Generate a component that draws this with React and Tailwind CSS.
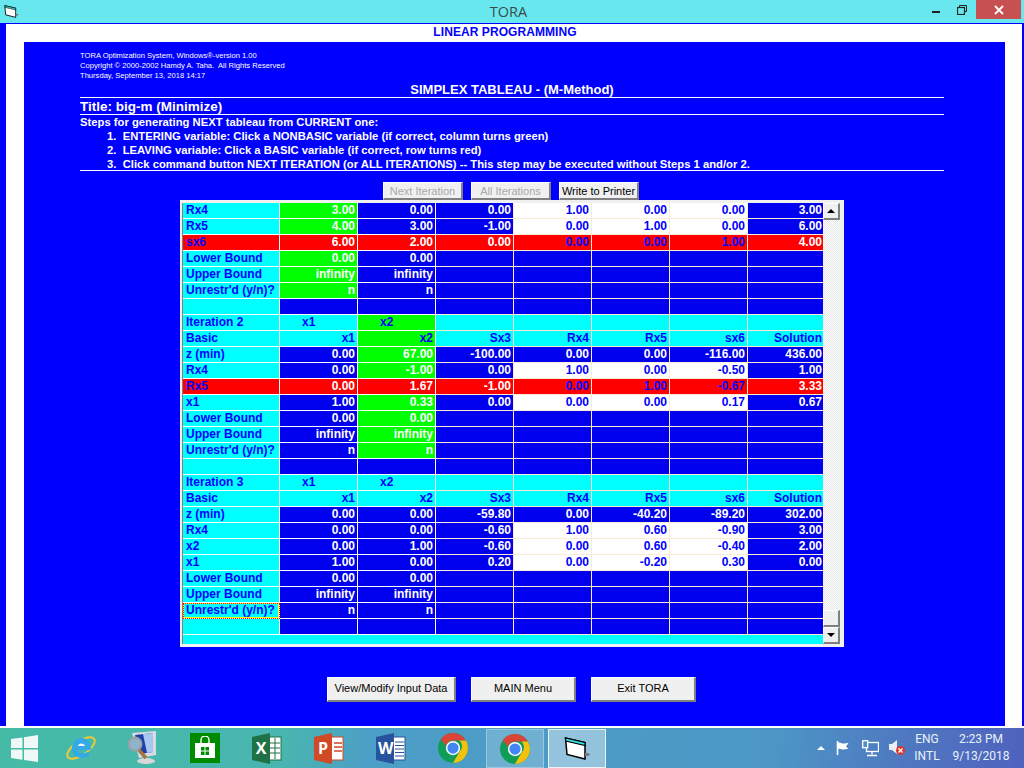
import React from 'react';

const LABEL = 'w-[97px]';
const WIDTHS = ['w-[78px]', 'w-[78px]', 'w-[78px]', 'w-[78px]', 'w-[78px]', 'w-[78px]', 'w-[76px]'];

// c = cyan, b = blue, g = green, r = red, w = white, R = red with blue text
const TONES = {
  c: 'bg-[#00ffff] text-[#0000ff]',
  b: 'bg-[#0000ee] text-white',
  g: 'bg-[#00ff00] text-white',
  G: 'bg-[#00ff00] text-[#0000ff]',
  r: 'bg-[#ff0000] text-white',
  R: 'bg-[#ff0000] text-[#0000ff]',
  w: 'bg-white text-[#0000ff]',
};

const bounds = (greenAt) => {
  const mk = (label, val) => ({
    label,
    vals: [val, val, '', '', '', '', ''],
    tones: [0, 1, 2, 3, 4, 5, 6].map((i) => (i === greenAt ? 'g' : 'b')),
  });
  return [mk('Lower Bound', '0.00'), mk('Upper Bound', 'infinity'), mk("Unrestr'd (y/n)?", 'n')];
};

const names = ['x1', 'x2', 'Sx3', 'Rx4', 'Rx5', 'sx6', 'Solution'];
const blankRow = { label: '', vals: ['', '', '', '', '', '', ''], tones: Array(7).fill('b') };

const rows = [
  { label: 'Rx4', vals: ['3.00', '0.00', '0.00', '1.00', '0.00', '0.00', '3.00'], tones: ['g', 'b', 'b', 'w', 'w', 'w', 'b'] },
  { label: 'Rx5', vals: ['4.00', '3.00', '-1.00', '0.00', '1.00', '0.00', '6.00'], tones: ['g', 'b', 'b', 'w', 'w', 'w', 'b'] },
  { label: 'sx6', labelTone: 'R', vals: ['6.00', '2.00', '0.00', '0.00', '0.00', '1.00', '4.00'], tones: ['r', 'r', 'r', 'R', 'R', 'R', 'r'] },
  ...bounds(0),
  blankRow,

  { label: 'Iteration 2', head: true, vals: ['x1', 'x2', '', '', '', '', ''], tones: ['c', 'G', 'c', 'c', 'c', 'c', 'c'] },
  { label: 'Basic', vals: names, tones: ['c', 'G', 'c', 'c', 'c', 'c', 'c'] },
  { label: 'z (min)', vals: ['0.00', '67.00', '-100.00', '0.00', '0.00', '-116.00', '436.00'], tones: ['b', 'g', 'b', 'b', 'b', 'b', 'b'] },
  { label: 'Rx4', vals: ['0.00', '-1.00', '0.00', '1.00', '0.00', '-0.50', '1.00'], tones: ['b', 'g', 'b', 'w', 'w', 'w', 'b'] },
  { label: 'Rx5', labelTone: 'R', vals: ['0.00', '1.67', '-1.00', '0.00', '1.00', '-0.67', '3.33'], tones: ['r', 'r', 'r', 'R', 'R', 'R', 'r'] },
  { label: 'x1', vals: ['1.00', '0.33', '0.00', '0.00', '0.00', '0.17', '0.67'], tones: ['b', 'g', 'b', 'w', 'w', 'w', 'b'] },
  ...bounds(1),
  blankRow,

  { label: 'Iteration 3', head: true, vals: ['x1', 'x2', '', '', '', '', ''], tones: Array(7).fill('c') },
  { label: 'Basic', vals: names, tones: Array(7).fill('c') },
  { label: 'z (min)', vals: ['0.00', '0.00', '-59.80', '0.00', '-40.20', '-89.20', '302.00'], tones: Array(7).fill('b') },
  { label: 'Rx4', vals: ['0.00', '0.00', '-0.60', '1.00', '0.60', '-0.90', '3.00'], tones: ['b', 'b', 'b', 'w', 'w', 'w', 'b'] },
  { label: 'x2', vals: ['0.00', '1.00', '-0.60', '0.00', '0.60', '-0.40', '2.00'], tones: ['b', 'b', 'b', 'w', 'w', 'w', 'b'] },
  { label: 'x1', vals: ['1.00', '0.00', '0.20', '0.00', '-0.20', '0.30', '0.00'], tones: ['b', 'b', 'b', 'w', 'w', 'w', 'b'] },
  ...bounds(-1),
  blankRow,
];

const Row = ({ row, focused }) => (
  <div className="flex h-4">
    <div className={`${LABEL} h-4 shrink-0 border-r border-b border-white px-[3px] leading-[15px] truncate ${TONES[row.labelTone || 'c']} ${focused ? 'outline-1 outline-dotted outline-[#ff0000] -outline-offset-1 shadow-[inset_0_0_0_1px_#ffff00]' : ''}`}>
      {row.label}
    </div>
    {row.vals.map((v, i) => (
      <div
        key={i}
        className={`${WIDTHS[i]} h-4 shrink-0 border-b leading-[15px] ${i < 6 ? 'border-r' : ''} ${i >= 2 ? 'border-[#faebd7]' : 'border-white'} ${row.head ? 'pl-[22px] text-left' : 'pr-[2px] text-right'} ${TONES[row.tones[i]]}`}
      >
        {v}
      </div>
    ))}
  </div>
);

const WinButton = ({ children, className = '', disabled }) => (
  <button className={`flex items-center justify-center bg-[#f0f0f0] border-t border-l border-t-white border-l-white border-r-2 border-b-2 border-r-[#808080] border-b-[#808080] text-[11px] font-['Liberation_Sans',sans-serif] ${disabled ? 'text-[#a8a8a8]' : 'text-black'} ${className}`}>
    {children}
  </button>
);

const TaskSlot = ({ children, state }) => (
  <div className={`w-[62px] h-full flex items-center justify-center ${state ? 'px-[2px]' : ''}`}>
    {state ? (
      <div className={`w-[58px] h-[39px] mt-[1px] flex items-center justify-center border ${state === 'open' ? 'bg-white/20 border-white/30' : ''} ${state === 'active' ? 'bg-white/40 border-white/80' : ''}`}>
        {children}
      </div>
    ) : children}
  </div>
);

const AppIcon = ({ size = 16 }) => (
  <svg width={size} height={size} viewBox="0 0 18 16">
    <path d="M1 1 L14 4 V15 L2 12 Z" fill="#fff" stroke="#000" strokeWidth="1" />
    <path d="M1 1 L14 4 V6 L1.200 3 Z" fill="#33e0e6" stroke="#000" strokeWidth="0.7" />
    <path d="M14 11 h2 l1.500 1 -1.500 1 h-2 z" fill="#777" />
  </svg>
);

const Chrome = () => (
  <svg width="30" height="30" viewBox="4 4 40 40">
    <circle cx="24" cy="24" r="20" fill="#0f9d58" />
    <path d="M24 4a20 20 0 0 1 17.300 10H24a10 10 0 0 0-9.500 6.900L7.700 12.400A20 20 0 0 1 24 4z" fill="#db4437" />
    <path d="M41.300 14A20 20 0 0 1 24 44l8.700-15A10 10 0 0 0 32.600 14z" fill="#f4c20d" />
    <circle cx="24" cy="24" r="9.500" fill="#fff" />
    <circle cx="24" cy="24" r="7.500" fill="#4285f4" />
  </svg>
);

const OfficeIcon = ({ letter, dark, children }) => (
  <div className="relative w-[30px] h-[31px]">
    <svg width="30" height="31" viewBox="0 0 30 31" className="absolute inset-0">
      <rect x="14" y="4" width="15" height="23" fill="#fff" stroke={dark} strokeWidth="1" />
      {children}
      <path d="M0 4 L18 0 V31 L0 27 Z" fill={dark} />
    </svg>
    <span className="absolute left-[2px] top-[5px] w-[14px] text-center text-[16px] leading-[20px] font-bold text-white font-['Open_Sans',sans-serif]">{letter}</span>
  </div>
);

export default function App() {
  return (
    <div className="w-[1024px] h-[768px] overflow-hidden flex flex-col bg-white font-['Liberation_Sans',Arial,sans-serif]">
      {/* title bar */}
      <div className="h-[23px] shrink-0 bg-[#69e7ee] flex items-start">
        <div className="pl-[4px] pt-[4px]"><AppIcon size={15} /></div>
        <div className="flex-1 text-center text-[14.5px] leading-[24px] text-[#3c4a4c] font-['Open_Sans',sans-serif] pl-[74px]">TORA</div>
        <div className="flex items-start h-[19px] mr-[3px]">
          <div className="w-[24px] h-[19px] flex items-center justify-center">
            <div className="w-[8px] h-[2px] bg-[#222] mt-[5px]" />
          </div>
          <div className="w-[28px] h-[19px] flex items-center justify-center">
            <svg width="10" height="10" viewBox="0 0 10 10" fill="none" stroke="#222"><path d="M2.500 2.500V.5h7v6h-2" /><rect x=".5" y="2.500" width="7" height="7" strokeWidth="1.200" /></svg>
          </div>
          <div className="w-[45px] h-[19px] bg-[#c75050] flex items-center justify-center">
            <svg width="10" height="10" viewBox="0 0 10 10" stroke="#fff" strokeWidth="1.800"><path d="M1 1l8 8M9 1l-8 8" /></svg>
          </div>
        </div>
      </div>

      {/* window body */}
      <div className="h-[705px] shrink-0 border-t border-[#0000ff] flex">
        <div className="w-[6px] h-[702px] bg-[#0000ff] shrink-0" />
        <div className="flex-1 flex flex-col pl-[18px] pr-[17px]">
          <div className="h-[18px] shrink-0 text-center text-[12px] leading-[17px] font-bold tracking-[0.07px] text-[#0000ff] pr-[19px]">LINEAR PROGRAMMING</div>

          {/* blue panel */}
          <div className="h-[684px] shrink-0 bg-[#0000ff] pl-[56px] pr-[61px] text-white flex flex-col">
            <div className="h-[41px] pt-[9px] text-[7.6px] leading-[10px] shrink-0">
              <div>TORA Optimization System, Windows®-version 1.00</div>
              <div>Copyright © 2000-2002 Hamdy A. Taha.&nbsp; All Rights Reserved</div>
              <div>Thursday, September 13, 2018 14:17</div>
            </div>
            <div className="h-[15px] shrink-0 border-b border-white text-center text-[13px] leading-[14px] font-bold">SIMPLEX TABLEAU - (M-Method)</div>
            <div className="h-[17px] shrink-0 border-b border-white text-[13.5px] leading-[17px] font-bold">Title: big-m (Minimize)</div>
            <div className="h-[56px] shrink-0 border-b border-white text-[11.25px] leading-[14px] font-bold">
              <div>Steps for generating NEXT tableau from CURRENT one:</div>
              <div className="pl-[27px]">1.&nbsp; ENTERING variable: Click a NONBASIC variable (if correct, column turns green)</div>
              <div className="pl-[27px]">2.&nbsp; LEAVING variable: Click a BASIC variable (if correct, row turns red)</div>
              <div className="pl-[27px]">3.&nbsp; Click command button NEXT ITERATION (or ALL ITERATIONS) -- This step may be executed without Steps 1 and/or 2.</div>
            </div>

            <div className="flex gap-[8px] pl-[303px] mt-[11px] h-[18px] shrink-0">
              <WinButton disabled className="w-[80px] h-[18px] pt-[1px]">Next Iteration</WinButton>
              <WinButton disabled className="w-[80px] h-[18px] pt-[1px]">All Iterations</WinButton>
              <WinButton className="w-[80px] h-[18px] pt-[1px]">Write to Printer</WinButton>
            </div>

            {/* tableau */}
            <div className="ml-[100px] w-[664px] h-[447px] shrink-0 bg-[#f0f0f0] pt-[3px] pl-[2px] pb-[3px] pr-[3px]">
              <div className="flex h-[441px] border-l border-[#808080]">
                <div className="w-[640px] shrink-0 flex flex-col bg-[#00ffff] text-[12px] font-bold">
                  {rows.map((r, i) => (
                    <Row key={i} row={r} focused={i === 25} />
                  ))}
                </div>
                <div className="w-[17px] shrink-0 flex flex-col bg-[repeating-conic-gradient(#ffffff_0_25%,#e6e6e6_0_50%)] bg-[length:2px_2px]">
                  <div className="h-[17px] shrink-0 bg-[#f0f0f0] border-t border-l border-white border-r-2 border-b-2 border-r-[#808080] border-b-[#808080] flex items-center justify-center">
                    <div className="w-0 h-0 border-x-[4px] border-x-transparent border-b-[4px] border-b-black" />
                  </div>
                  <div className="flex-1" />
                  <div className="h-[17px] shrink-0 bg-[#f0f0f0] border-t border-l border-white border-r-2 border-b-2 border-r-[#808080] border-b-[#808080]" />
                  <div className="h-[17px] shrink-0 bg-[#f0f0f0] border-t border-l border-white border-r-2 border-b-2 border-r-[#808080] border-b-[#808080] flex items-center justify-center">
                    <div className="w-0 h-0 border-x-[4px] border-x-transparent border-t-[4px] border-t-black" />
                  </div>
                </div>
              </div>
            </div>

            <div className="flex gap-[15px] pl-[247px] mt-[30px] shrink-0">
              <WinButton className="w-[129px] h-[25px] pb-[1px]">View/Modify Input Data</WinButton>
              <WinButton className="w-[105px] h-[25px] pb-[1px]">MAIN Menu</WinButton>
              <WinButton className="w-[105px] h-[25px] pb-[1px]">Exit TORA</WinButton>
            </div>
          </div>
          <div className="h-[2px] shrink-0 bg-white" />
        </div>
        <div className="w-[2px] h-[702px] bg-[#0000ff] shrink-0" />
      </div>

      {/* taskbar */}
      <div className="h-[40px] shrink-0 flex items-center text-white bg-[linear-gradient(100deg,#45bba6_0%,#49b5b0_28%,#4c9fc6_36%,#4c97c6_75%,#4f78c0_88%,#4f62be_100%)]">
        <div className="w-[50px] h-full flex items-center pl-[11px]">
          <svg width="27" height="27" viewBox="0 0 27 27" fill="#eef8f6">
            <path d="M0 4l11.500-1.600V13H0zM13 2.200L27 0v13H13zM0 14.500h11.500v10.200L0 23zM13 14.500h14V27l-14-2z" />
          </svg>
        </div>
        <TaskSlot>
          <svg width="30" height="32" viewBox="0 0 30 32" fill="none">
            <ellipse cx="15" cy="16" rx="16" ry="7" transform="rotate(-35 15 16)" stroke="#f0c93a" strokeWidth="2" />
            <path d="M6 17c0-7 4-11 9.500-11S25 10 25 18H12c.5 3 4.500 5 11 1.500v5C15 28 6 25 6 17z" fill="#33a9e6" />
            <path d="M12 14c.5-3 5.500-3.500 7 0z" fill="#eef9ff" />
          </svg>
        </TaskSlot>
        <TaskSlot>
          <svg width="32" height="34" viewBox="0 0 32 34">
            <path d="M5 2l24-2v24l-17 3z" fill="#d7dbe6" />
            <path d="M8 4l18-2v19l-13 2z" fill="#1d3fa8" />
            <path d="M16 3l10-1v19l-6 1z" fill="#a9c6ee" />
            <ellipse cx="19" cy="30" rx="9" ry="3" fill="#d8d8d8" />
            <path d="M11 18l8 9" stroke="#a8743e" strokeWidth="3.500" />
            <circle cx="8" cy="13" r="6.500" fill="#8fb4c9" stroke="#9a9fa4" strokeWidth="2" />
          </svg>
        </TaskSlot>
        <TaskSlot>
          <div className="w-[30px] h-[30px] bg-[#008a00] flex items-center justify-center">
            <svg width="22" height="24" viewBox="0 0 22 24" fill="#fff">
              <path d="M7 7V4a4 4 0 0 1 8 0v3" fill="none" stroke="#fff" strokeWidth="1.400" />
              <path d="M1 7h20v15H1z" />
              <path d="M7 11h3.500v3.500H7zM11.500 11H15v3.500h-3.500zM7 15.500h3.500V19H7zM11.500 15.500H15V19h-3.500z" fill="#008a00" />
            </svg>
          </div>
        </TaskSlot>
        <TaskSlot>
          <OfficeIcon letter="X" dark="#1f7245">
            <path d="M18 10h10M18 15h10M18 20h10M23 5v21" stroke="#1f7245" />
          </OfficeIcon>
        </TaskSlot>
        <TaskSlot>
          <OfficeIcon letter="P" dark="#d04a26">
            <path d="M20 10h8M20 14h8M20 18h8" stroke="#d04a26" strokeWidth="1.500" />
          </OfficeIcon>
        </TaskSlot>
        <TaskSlot>
          <OfficeIcon letter="W" dark="#27539c">
            <path d="M19 9h9M19 12.500h9M19 16h9M19 19.500h9M19 23h9" stroke="#27539c" />
          </OfficeIcon>
        </TaskSlot>
        <TaskSlot><Chrome /></TaskSlot>
        <TaskSlot state="open"><Chrome /></TaskSlot>
        <TaskSlot state="active"><AppIcon size={27} /></TaskSlot>

        <div className="ml-auto flex items-center h-full">
          <div className="w-0 h-0 border-x-[4px] border-x-transparent border-b-[4px] border-b-white mr-[10px]" />
          <svg width="16" height="16" viewBox="0 0 16 16" fill="none" className="mr-[11px]">
            <path d="M2.500 1v14" stroke="#fff" strokeWidth="1.600" />
            <path d="M3 2.500c3-.5 3 1 5.500 1s3-.5 5-.5L11 6.500l2.500 2.500c-3 0-4 .5-6 .5S4.500 8.500 3 9z" fill="#fff" />
          </svg>
          <svg width="17" height="17" viewBox="0 0 17 17" fill="none" stroke="#fff" strokeWidth="1.300" className="mr-[10px]">
            <rect x="4.500" y="2.500" width="12" height="9" />
            <rect x=".7" y=".7" width="5" height="7" fill="#4c90c6" />
            <path d="M10 11.500v3M5 15.500h10" />
          </svg>
          <div className="relative w-[17px] h-[16px] mr-[7px]">
            <svg width="12" height="14" viewBox="0 0 12 14" fill="#e8eef4" className="absolute left-0 top-0"><path d="M0 4h3l5-4v14l-5-4H0z" /></svg>
            <div className="absolute left-[7px] top-[6px] w-[9px] h-[9px] rounded-full bg-[#d93a30] flex items-center justify-center">
              <svg width="5" height="5" viewBox="0 0 5 5" stroke="#fff" strokeWidth="1.200"><path d="M.5.5l4 4M4.500.5l-4 4" /></svg>
            </div>
          </div>
          <div className="w-[28px] text-center text-[12px] leading-[17px] font-['Roboto',sans-serif] mr-[10px] text-[#e9f2f8]">
            <div>ENG</div><div>INTL</div>
          </div>
          <div className="w-[60px] text-center text-[12px] leading-[17px] font-['Roboto',sans-serif] mr-[13px] text-[#e9f2f8]">
            <div>2:23 PM</div><div>9/13/2018</div>
          </div>
        </div>
      </div>
    </div>
  );
}
